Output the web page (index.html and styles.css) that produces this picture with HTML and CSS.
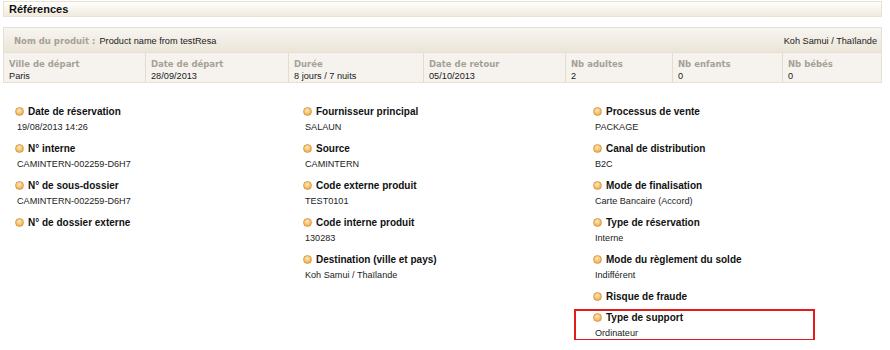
FILE: index.html
```html
<!DOCTYPE html>
<html lang="fr">
<head>
    <meta charset="UTF-8">
    <title>Références</title>
    <link rel="stylesheet" href="styles.css">
</head>
<body>
    <div class="page">
        <div class="section-title">Références</div>

        <div class="product">
            <div class="product-head">
                <span class="muted">Nom du produit :</span>
                <span class="product-name">Product name from testResa</span>
                <span class="product-dest">Koh Samui / Thaïlande</span>
            </div>
            <div class="product-cols">
                <div class="cell"><div class="muted">Ville de départ</div><div class="cell-value">Paris</div></div>
                <div class="cell"><div class="muted">Date de départ</div><div class="cell-value">28/09/2013</div></div>
                <div class="cell"><div class="muted">Durée</div><div class="cell-value">8 jours / 7 nuits</div></div>
                <div class="cell"><div class="muted">Date de retour</div><div class="cell-value">05/10/2013</div></div>
                <div class="cell"><div class="muted">Nb adultes</div><div class="cell-value">2</div></div>
                <div class="cell"><div class="muted">Nb enfants</div><div class="cell-value">0</div></div>
                <div class="cell"><div class="muted">Nb bébés</div><div class="cell-value">0</div></div>
            </div>
        </div>

        <div class="refs">
            <div class="refs-col">
                <div class="item"><div class="item-label"><span class="dot"></span>Date de réservation</div><div class="item-value">19/08/2013 14:26</div></div>
                <div class="item"><div class="item-label"><span class="dot"></span>N° interne</div><div class="item-value">CAMINTERN-002259-D6H7</div></div>
                <div class="item"><div class="item-label"><span class="dot"></span>N° de sous-dossier</div><div class="item-value">CAMINTERN-002259-D6H7</div></div>
                <div class="item"><div class="item-label"><span class="dot"></span>N° de dossier externe</div></div>
            </div>
            <div class="refs-col">
                <div class="item"><div class="item-label"><span class="dot"></span>Fournisseur principal</div><div class="item-value">SALAUN</div></div>
                <div class="item"><div class="item-label"><span class="dot"></span>Source</div><div class="item-value">CAMINTERN</div></div>
                <div class="item"><div class="item-label"><span class="dot"></span>Code externe produit</div><div class="item-value">TEST0101</div></div>
                <div class="item"><div class="item-label"><span class="dot"></span>Code interne produit</div><div class="item-value">130283</div></div>
                <div class="item"><div class="item-label"><span class="dot"></span>Destination (ville et pays)</div><div class="item-value">Koh Samui / Thaïlande</div></div>
            </div>
            <div class="refs-col">
                <div class="item"><div class="item-label"><span class="dot"></span>Processus de vente</div><div class="item-value">PACKAGE</div></div>
                <div class="item"><div class="item-label"><span class="dot"></span>Canal de distribution</div><div class="item-value">B2C</div></div>
                <div class="item"><div class="item-label"><span class="dot"></span>Mode de finalisation</div><div class="item-value">Carte Bancaire (Accord)</div></div>
                <div class="item"><div class="item-label"><span class="dot"></span>Type de réservation</div><div class="item-value">Interne</div></div>
                <div class="item"><div class="item-label"><span class="dot"></span>Mode du règlement du solde</div><div class="item-value">Indifférent</div></div>
                <div class="item"><div class="item-label"><span class="dot"></span>Risque de fraude</div></div>
                <div class="item flagged"><div class="item-label"><span class="dot"></span>Type de support</div><div class="item-value">Ordinateur</div></div>
            </div>
        </div>
    </div>
</body>
</html>
```

FILE: styles.css
```css
body {
    margin: 0;
    background-color: white;
    color: #1a1a1a;
    font-family: "Liberation Sans", Arial, sans-serif;
}

.page {
    padding: 1px 8px 0 3px;
}

.section-title {
    height: 14px;
    line-height: 14px;
    padding: 0 5px;
    font-size: 11px;
    font-weight: bold;
    color: #111;
    border: 1px solid #e8e1d4;
    background: linear-gradient(#ffffff, #f1eadd);
}

.product {
    margin-top: 10px;
    border: 1px solid #e6dfd2;
}

.muted {
    font-family: "DejaVu Sans", Verdana, sans-serif;
    font-size: 8.5px;
    font-weight: bold;
    color: #a6a096;
    line-height: 12px;
}

.product-head {
    display: flex;
    align-items: center;
    height: 25px;
    padding: 1px 4px 0 10px;
    box-sizing: border-box;
    border-bottom: 1px solid #e6dfd2;
    background: linear-gradient(#f8f6f2, #ece5d8);
    font-size: 9.2px;
}

.product-name {
    margin-left: 4px;
}

.product-dest {
    margin-left: auto;
}

.product-cols {
    display: grid;
    grid-template-columns: 141px 143px 135px 142px 107px 110px 1fr;
    background-color: #f6f3ee;
}

.cell {
    padding: 5px 5px 0 5px;
    border-left: 1px solid #e4dccd;
}

.cell:first-child {
    border-left: none;
}

.cell-value {
    line-height: 12px;
    font-size: 9.2px;
}

.refs {
    display: grid;
    grid-template-columns: 288px 290px 1fr;
    padding: 14px 0 0 12px;
}

.item {
    position: relative;
}

.item-label {
    display: flex;
    align-items: center;
    gap: 4px;
    padding-top: 7px;
    height: 14px;
    font-size: 10px;
    font-weight: bold;
    color: #111;
}

.dot {
    width: 9px;
    height: 9px;
    border-radius: 50%;
    box-sizing: border-box;
    border: 1px solid #d89c48;
    background: radial-gradient(circle at 45% 35%, #fde9c2, #f5bf66 55%, #e09a3a);
}

.item-value {
    padding: 2px 0 0 2px;
    height: 14px;
    line-height: 14px;
    font-size: 9.1px;
    color: #222;
}

/* encadré rouge autour du type de support */
.flagged::after {
    content: "";
    position: absolute;
    left: -19px;
    top: 6px;
    width: 241px;
    bottom: -1px;
    border: 2px solid #e31b1b;
    box-sizing: border-box;
}
```
